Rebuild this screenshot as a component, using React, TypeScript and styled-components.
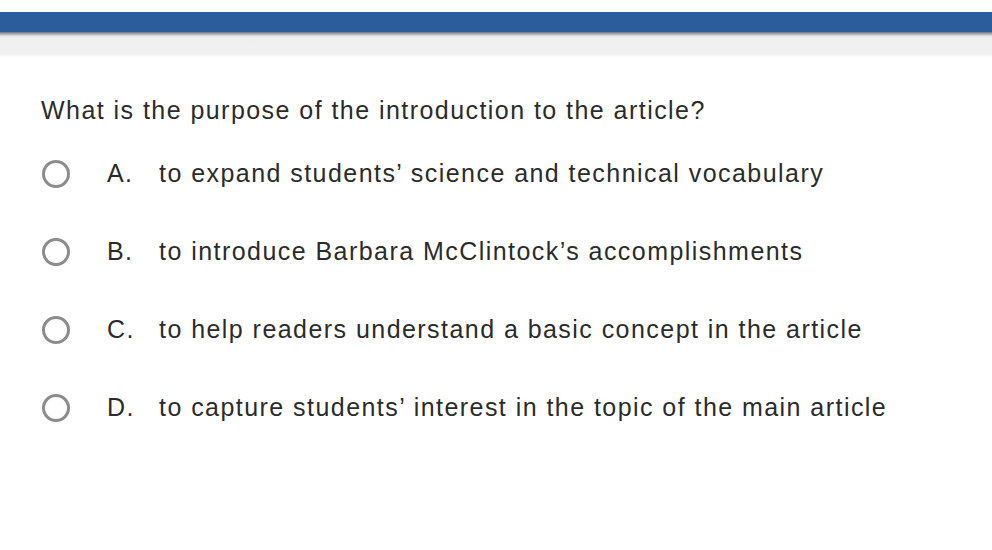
import React from "react";
import styled, { createGlobalStyle } from "styled-components";

const Global = createGlobalStyle`
  html, body { margin: 0; padding: 0; background: #fff; }
  body { font-family: "Liberation Sans", Arial, sans-serif; }
`;

const Page = styled.div`
  width: 992px;
  height: 550px;
  background: #fff;
  overflow: hidden;
  display: flex;
  flex-direction: column;
`;

const TopGap = styled.div`
  height: 12px;
  background: #fffffb;
`;

const BlueBar = styled.div`
  height: 20px;
  background: #2b5c9c;
`;

const ShadowBand = styled.div`
  height: 25px;
  background: linear-gradient(
    to bottom,
    #6f747b 0px,
    #a9acb0 2px,
    #e2e2e3 4px,
    #efefef 6px,
    #f0f0f0 22px,
    #f7f7f7 24px,
    #fdfdfd 25px
  );
`;

const Content = styled.div`
  padding: 38px 0 0 41px;
  display: flex;
  flex-direction: column;
`;

const Question = styled.div`
  font-size: 25px;
  letter-spacing: 1.45px;
  color: #2b2b2b;
  line-height: 30px;
  margin-bottom: 33px;
  white-space: nowrap;
`;

const Options = styled.div`
  display: flex;
  flex-direction: column;
  gap: 48px;
`;

const Option = styled.label`
  display: flex;
  align-items: center;
  height: 30px;
  font-size: 25px;
  letter-spacing: 1.45px;
  color: #2b2b2b;
  cursor: pointer;
  white-space: nowrap;
`;

const Radio = styled.span`
  width: 22px;
  height: 22px;
  border: 3px solid #8c8c8c;
  border-radius: 50%;
  box-sizing: content-box;
  margin-left: 1px;
  margin-top: 1px;
  flex-shrink: 0;
`;

const Letter = styled.span`
  margin-left: 37px;
  width: 52px;
`;

const Text = styled.span``;

const options = [
  ["A.", "to expand students’ science and technical vocabulary"],
  ["B.", "to introduce Barbara McClintock’s accomplishments"],
  ["C.", "to help readers understand a basic concept in the article"],
  ["D.", "to capture students’ interest in the topic of the main article"],
];

export default function App() {
  return (
    <Page>
      <Global />
      <TopGap />
      <BlueBar />
      <ShadowBand />
      <Content>
        <Question>What is the purpose of the introduction to the article?</Question>
        <Options>
          {options.map(([l, t]) => (
            <Option key={l}>
              <Radio />
              <Letter>{l}</Letter>
              <Text>{t}</Text>
            </Option>
          ))}
        </Options>
      </Content>
    </Page>
  );
}
